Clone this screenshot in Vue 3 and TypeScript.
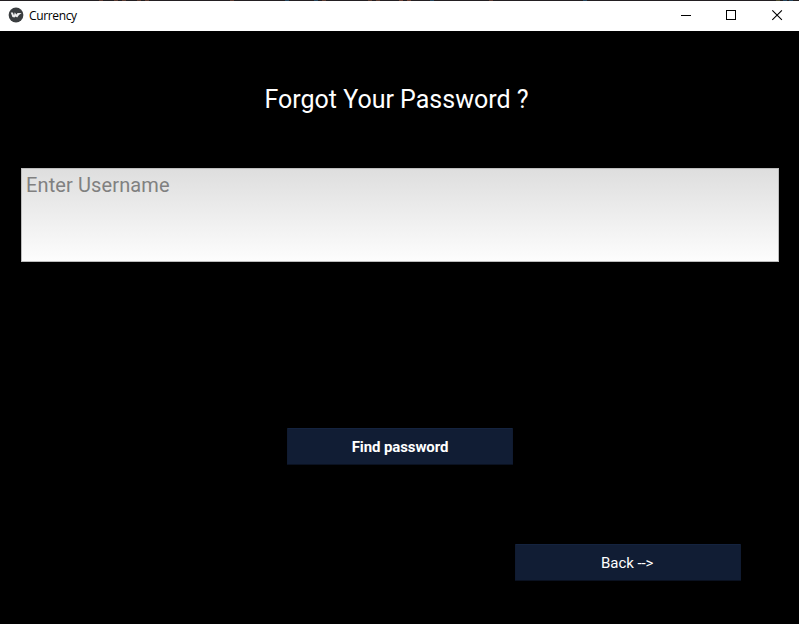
<script setup lang="ts">
import { ref } from 'vue'

const username = ref('')
const flecks = [
  { x: 99, color: '#5a3a30' },
  { x: 114, color: '#5a3a30' },
  { x: 122, color: '#5a3a30' },
  { x: 137, color: '#5a3a30' },
  { x: 145, color: '#5a3a30' },
  { x: 230, color: '#5a3a30' },
  { x: 285, color: '#24445c' },
  { x: 314, color: '#24445c' },
  { x: 322, color: '#5a3a30' },
  { x: 368, color: '#5a3a30' },
  { x: 376, color: '#5a3a30' },
  { x: 399, color: '#6a4034' },
  { x: 407, color: '#6a4034' },
  { x: 430, color: '#24445c' },
  { x: 489, color: '#5a3a30' },
  { x: 583, color: '#24445c' },
  { x: 776, color: '#4d4a30' },
  { x: 783, color: '#24445c' },
  { x: 789, color: '#24445c' },
]
</script>

<template>
  <div class="window">
    <svg class="edge" width="799" height="1" shape-rendering="crispEdges">
      <rect width="799" height="1" fill="#231f22" />
      <rect v-for="f in flecks" :key="f.x" :x="f.x" width="4" height="1" :fill="f.color" />
    </svg>
    <header class="titlebar">
      <svg class="logo" width="16" height="16" viewBox="0 0 16 16">
        <circle cx="8" cy="8" r="7.4" fill="#3b3e40" />
        <path d="M2.8 5.4 4.8 5.4 6 8.2 6.8 5.2 8.3 7.6 9.6 6 13.6 6 11 8 9.2 10.6 7.6 9.4 6.4 10.4 4.4 9.9Z" fill="#eeeeee" />
      </svg>
      <span class="caption">Currency</span>
      <nav class="controls">
        <svg width="46" height="30" shape-rendering="crispEdges"><path d="M18 14.5h10" stroke="#000" /></svg>
        <svg width="46" height="30" shape-rendering="crispEdges"><path d="M17.5 9.5h9v9h-9z" fill="none" stroke="#000" /></svg>
        <svg width="44" height="30"><path d="M17.3 9.3l9.6 9.6M26.9 9.3l-9.6 9.6" stroke="#000" stroke-width="1.1" /></svg>
      </nav>
    </header>
    <main class="screen">
      <h1>Forgot Your Password ?</h1>
      <textarea v-model="username" class="field" placeholder="Enter Username" />
      <button class="btn find">Find password</button>
      <button class="btn back">Back <span class="arrow">--&gt;</span></button>
    </main>
  </div>
</template>

<style>
body {
  background: #000;
  overflow: hidden;
}
</style>

<style scoped>
.window {
  display: flex;
  flex-direction: column;
  width: 799px;
  height: 624px;
  background: #000;
  font-family: Roboto, sans-serif;
}
.edge {
  display: block;
}
.titlebar {
  display: flex;
  align-items: flex-start;
  height: 30px;
  background: #fff;
}
.logo {
  margin: 6px 5px 0 8px;
}
.caption {
  font: 12px/16px "Open Sans", "Noto Sans", sans-serif;
  letter-spacing: -0.35px;
  margin-top: 7px;
  color: #000;
}
.controls {
  display: flex;
  margin-left: auto;
}
.screen {
  display: flex;
  flex-direction: column;
  flex: 1;
  padding: 54px 20px 0 21px;
}
h1 {
  margin: 0 0 53px;
  padding-right: 7px;
  text-align: center;
  font-size: 25px;
  line-height: 30px;
  font-weight: 400;
  color: #fff;
}
.field {
  box-sizing: border-box;
  height: 94px;
  margin: 0;
  padding: 4px 4px;
  border: 1px solid #bdbdbd;
  border-radius: 0;
  outline: none;
  resize: none;
  background: linear-gradient(#dedede, #fdfdfd);
  font: 20px/24px Roboto, sans-serif;
  letter-spacing: 0.12px;
  color: #000;
}
.field::placeholder {
  color: #808080;
  opacity: 1;
}
.btn {
  box-sizing: border-box;
  width: 226px;
  height: 37px;
  padding: 0;
  border: 1px solid #101b31;
  border-top-color: #14233f;
  border-bottom-color: #0a1120;
  border-radius: 1px;
  background: #111d34;
  background-clip: padding-box;
  color: #fff;
  font: 15px/18px Roboto, sans-serif;
}
.find {
  margin: 166px 0 0 266px;
  font-weight: 700;
  letter-spacing: -0.1px;
}
.back {
  margin: 79px 0 0 494px;
  padding-right: 2px;
}
.arrow {
  letter-spacing: -0.2px;
}
</style>
